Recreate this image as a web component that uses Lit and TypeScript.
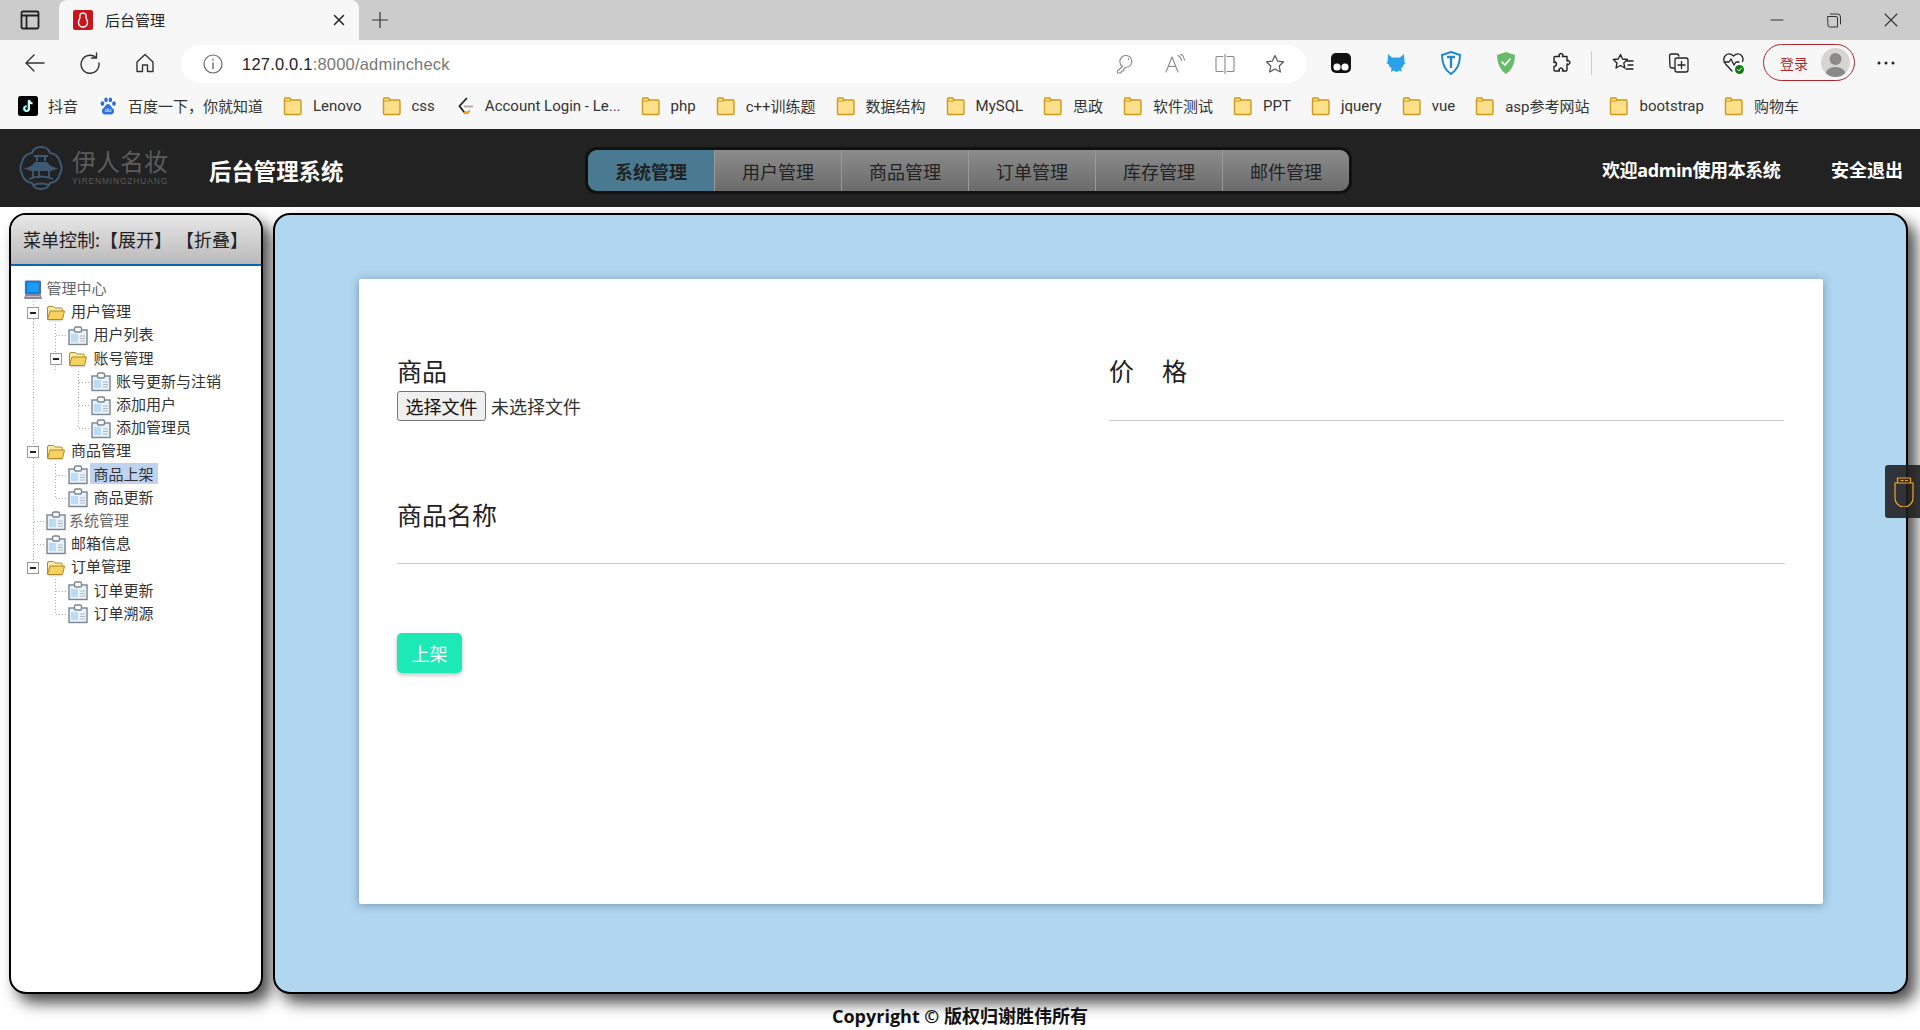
import { LitElement, css, html, svg } from 'lit';
import { customElement } from 'lit/decorators.js';

const folder = html`<svg class="bm-ico" viewBox="0 0 20 20"><path d="M1.5 5V3.2q0-1.2 1.2-1.2h4l1.6 2h8.500q1.200 0 1.200 1.200v12q0 1.300-1.300 1.300H2.800q-1.300 0-1.300-1.300z" fill="#ffe08a" stroke="#c99a1c" stroke-width="1.4"/><path d="M1.500 5h5.500l1.300-1" fill="none" stroke="#c99a1c" stroke-width="1.2"/></svg>`;

const tiktok = html`<svg class="bm-ico" viewBox="0 0 20 20"><rect width="20" height="20" rx="2.5" fill="#000"/><path d="M11 4v8.600a2.400 2.400 0 1 1-2.400-2.400M11 4q.4 3 3.600 3.400" fill="none" stroke="#fff" stroke-width="2"/><path d="M10 4.600v8a2.400 2.400 0 1 1-2.400-2.400" fill="none" stroke="#25f4ee" stroke-width=".8"/></svg>`;

const baidu = html`<svg class="bm-ico" viewBox="0 0 20 20"><rect width="20" height="20" fill="#fff"/><g fill="#2f6fde"><ellipse cx="4.400" cy="7.600" rx="1.900" ry="2.400"/><ellipse cx="8" cy="3.900" rx="1.800" ry="2.400"/><ellipse cx="12.400" cy="3.900" rx="1.800" ry="2.400"/><ellipse cx="16" cy="7.600" rx="1.900" ry="2.400"/><path d="M10 8c-2.600 0-3 3-5 4.500C3 14.500 4 18.500 7 18.500h6c3 0 4-4 2-6C13 11 12.600 8 10 8z"/></g><text x="10" y="16.200" text-anchor="middle" font-size="6" font-family="Liberation Sans" fill="#fff">du</text></svg>`;

const leetcode = html`<svg class="bm-ico" viewBox="0 0 20 20"><path d="M12 2 4.500 10l4.500 6q2 2 4.500 0" fill="none" stroke="#222" stroke-width="1.800"/><path d="M9 10.500h9" stroke="#aaa" stroke-width="1.800"/><path d="M9 16q2 2 4.500 0l1.500-1.500" fill="none" stroke="#f5a623" stroke-width="1.800"/></svg>`;

const bookmarks: [unknown, string][] = [
  [tiktok, '抖音'], [baidu, '百度一下\uFF0C你就知道'], [folder, 'Lenovo'], [folder, 'css'],
  [leetcode, 'Account Login - Le...'], [folder, 'php'], [folder, 'c++训练题'], [folder, '数据结构'],
  [folder, 'MySQL'], [folder, '思政'], [folder, '软件测试'], [folder, 'PPT'], [folder, 'jquery'],
  [folder, 'vue'], [folder, 'asp参考网站'], [folder, 'bootstrap'], [folder, '购物车'],
];

const navItems = ['系统管理', '用户管理', '商品管理', '订单管理', '库存管理', '邮件管理'];

type Cell = 'v' | 'b' | 't' | 'c' | 'mv' | 'mc';
type Node = { cells: Cell[]; icon: 'pc' | 'open' | 'leaf'; label: string; muted?: boolean; selected?: boolean; tight?: boolean };

const tree: Node[] = [
  { cells: [], icon: 'pc', label: '管理中心', muted: true, tight: true },
  { cells: ['mv'], icon: 'open', label: '用户管理' },
  { cells: ['v', 't'], icon: 'leaf', label: '用户列表' },
  { cells: ['v', 'mv'], icon: 'open', label: '账号管理' },
  { cells: ['v', 'b', 't'], icon: 'leaf', label: '账号更新与注销' },
  { cells: ['v', 'b', 't'], icon: 'leaf', label: '添加用户' },
  { cells: ['v', 'b', 'c'], icon: 'leaf', label: '添加管理员' },
  { cells: ['mv'], icon: 'open', label: '商品管理' },
  { cells: ['v', 't'], icon: 'leaf', label: '商品上架', selected: true },
  { cells: ['v', 'c'], icon: 'leaf', label: '商品更新' },
  { cells: ['t'], icon: 'leaf', label: '系统管理', muted: true, tight: true },
  { cells: ['t'], icon: 'leaf', label: '邮箱信息' },
  { cells: ['mc'], icon: 'open', label: '订单管理' },
  { cells: ['b', 't'], icon: 'leaf', label: '订单更新' },
  { cells: ['b', 'c'], icon: 'leaf', label: '订单溯源' },
];

const treeIcons = {
  pc: html`<svg class="ti" viewBox="0 0 20 20"><rect x="2.500" y="1" width="15" height="13" rx="1" fill="#0a84e8" stroke="#667" stroke-width="1.200"/><rect x="4.500" y="3" width="11" height="9" fill="#1e9bf5"/><path d="M1 19l1.500-5h15l1.500 5z" fill="#889"/><path d="M3 16.500h14" stroke="#ccd" stroke-width=".8"/></svg>`,
  open: html`<svg class="ti" viewBox="0 0 20 20"><path d="M1.500 16V5q0-1.500 1.500-1.500h4.500L9 5h6q1.500 0 1.500 1.500V8" fill="#fbeaa8" stroke="#a98a2c"/><path d="M1.500 16.500 4 8h14.500l-2 8.500z" fill="#f7d25e" stroke="#a98a2c"/><path d="M2.500 17.800h14" stroke="#ccc" stroke-width="1"/></svg>`,
  leaf: html`<svg class="ti" viewBox="0 0 20 20"><rect x="1" y="4" width="18" height="14.500" fill="#e8f2fb" stroke="#7b8490" stroke-width="1.400"/><rect x="6.500" y="1" width="7" height="5" rx="1.500" fill="#fff" stroke="#7b8490" stroke-width="1.400"/><rect x="3" y="8" width="7" height="8" fill="#bcdcf6"/><path d="M12 10h5M12 12.500h5M12 15h5" stroke="#b3b8be"/></svg>`,
};

const line = (d: string, w = 1.3, c = '#333') =>
  svg`<path d=${d} fill="none" stroke=${c} stroke-width=${w} stroke-linecap="round" stroke-linejoin="round"/>`;

@customElement('app-root')
export class AppRoot extends LitElement {
  static styles = css`
    :host { display: block; width: 1920px; height: 1030px; overflow: hidden; background: #fff;
      font-family: "Noto Sans CJK SC", sans-serif; color: #222; }
    svg { display: block; flex: none; }

    .tabs { height: 40px; background: #ccc; display: flex; align-items: stretch; padding-left: 20px; }
    .tab-side { width: 39px; display: flex; align-items: center; }
    .tab { width: 300px; box-sizing: border-box; background: #f7f7f7; border-radius: 8px 8px 0 0;
      display: flex; align-items: center; padding: 0 14px; font-size: 15px; }
    .tab-title { margin: 0 0 2px 12px; flex: 1; }
    .new-tab { margin-left: 13px; display: flex; align-items: center; }
    .win { margin-left: auto; display: flex; align-items: center; padding-right: 1px; }
    .win div { width: 57px; display: flex; justify-content: center; }

    .toolbar { height: 45px; background: #f7f7f7; display: flex; align-items: center; padding-left: 7px; }
    .tb { width: 55px; height: 38px; display: flex; align-items: center; justify-content: center; flex: none; }
    .tb.gap { margin-left: 7px; }
    .tb.wide { width: 56px; }
    .address { width: 1125px; height: 38px; margin-left: 9px; margin-top: 3px; box-sizing: border-box; background: #fff; border-radius: 19px;
      display: flex; align-items: center; padding-left: 22px; }
    .url { margin: 1px 0 0 19px; font: 16.5px "Liberation Sans", sans-serif; letter-spacing: 0.2px; color: #777; flex: 1; }
    .url b { font-weight: 400; color: #222; }
    .addr-ico { width: 50px; display: flex; justify-content: center; }
    .addr-end { width: 6px; }
    .sep { width: 1px; height: 24px; background: #ccc; margin: 0 3px; flex: none; }
    .login { width: 92px; height: 37px; box-sizing: border-box; margin: 0 3px 0 2px; border: 1.5px solid #a8282c; border-radius: 19px; display: flex;
      align-items: center; justify-content: space-between; padding: 0 4px 0 16px; font-size: 14px; color: #a8282c; flex: none; }
    .avatar { width: 29px; height: 29px; border-radius: 50%; background: #d6d5d2; overflow: hidden; }

    .bookmarks { height: 44px; box-sizing: border-box; padding: 0 0 3px 18px; background: #f7f7f7; display: flex; align-items: center; gap: 20px;
      font-size: 15px; font-family: Roboto, "Noto Sans CJK SC", sans-serif; color: #333; white-space: nowrap; }
    .bm { display: flex; align-items: center; gap: 10px; }
    .bm-ico { width: 20px; height: 20px; }

    .header { height: 78px; background: #222; display: flex; align-items: center; color: #fff; }
    .logo { width: 190px; display: flex; align-items: center; padding-left: 19px; box-sizing: border-box; gap: 9px; flex: none; }
    .logo-text { color: #5c5c5c; display: flex; flex-direction: column; }
    .logo-cn { font-size: 24px; line-height: 30px; margin-top: -4px; }
    .logo-en { font: 8.5px/11px "Liberation Sans", sans-serif; letter-spacing: 0.8px; white-space: nowrap; }
    .title { font-size: 22.4px; font-weight: 700; margin: 4px 0 0 19px; width: 376px; flex: none; }
    .nav { display: flex; width: 767px; height: 47px; box-sizing: border-box; border: 3px solid #111; border-radius: 12px; overflow: hidden; margin-top: 5px; flex: none; }
    .nav-item { flex: 1; display: flex; align-items: center; justify-content: center; font-size: 18px; color: #222;
      background: linear-gradient(#8c8c8c, #6b6b6b); border-left: 1px solid #9a9a9a; }
    .nav-item.active { background: #4a7a92; font-weight: 700; border-left: 0; }
    .welcome { margin: 1px 0 0 250px; width: 229px; font-size: 18px; font-weight: 700; flex: none; font-family: "Open Sans", "Noto Sans CJK SC", sans-serif; letter-spacing: -0.4px; white-space: nowrap; }
    .logout { font-size: 18px; font-weight: 700; margin-top: 1px; }

    .body { display: flex; gap: 10px; padding: 6px 12px 0 9px; height: 787px; box-sizing: border-box; }
    .panel { border: 2px solid #000; box-shadow: 8px 9px 15px rgba(0, 0, 0, 0.7); height: 781px; box-sizing: border-box; }
    .side { width: 254px; border-radius: 17px; overflow: hidden; background: #fff; flex: none; }
    .side-head { height: 51px; box-sizing: border-box; padding: 0 0 1px 12px; background: linear-gradient(#e8e8e8, #b9b9b9); border-bottom: 2px solid #0a64b4; display: flex; align-items: center;
      font-size: 18px; white-space: nowrap; color: #222; }
    .tree { padding: 12px 0 0 11px; font-size: 15px; color: #333; }
    .row { display: flex; align-items: center; height: 23.2px; }
    .row.muted { color: #666; }
    .cell { width: 22.5px; height: 100%; flex: none; display: flex; align-items: center; justify-content: center; background-repeat: no-repeat; }
    .v, .mv { background-image: repeating-linear-gradient(#aaa 0 1px, transparent 1px 3px); background-size: 1px 100%; background-position: center; }
    .t, .c { background-image: repeating-linear-gradient(#aaa 0 1px, transparent 1px 3px), repeating-linear-gradient(90deg, #aaa 0 1px, transparent 1px 3px); }
    .t { background-size: 1px 100%, 11px 1px; background-position: center, right center; }
    .c { background-size: 1px 50%, 11px 1px; background-position: center top, right center; }
    .mc { background-image: repeating-linear-gradient(#aaa 0 1px, transparent 1px 3px); background-size: 1px 50%; background-position: center top; }
    .box { width: 12px; height: 12px; box-sizing: border-box; background: #fff; border: 1.5px solid #999; display: flex; align-items: center; justify-content: center; }
    .box i { width: 6px; height: 1.5px; background: #222; display: block; }
    .ti { width: 20px; height: 20px; }
    .icon-cell { width: 22.5px; display: flex; justify-content: center; flex: none; }
    .label { margin: 0 1px 4px 4px; }
    .label.tight { margin-left: 2px; }
    .label.selected { background: #bfd2ee; height: 21px; line-height: 21px; padding: 0 4px; margin-left: 0; }

    .main { flex: 1; border-radius: 17px; background: #b0d6f0; padding: 64px 83px 0 84px; }
    .card { background: #fff; height: 625px; box-sizing: border-box; border-radius: 2px; padding: 74px 38px 0;
      box-shadow: 0 1px 10px rgba(40, 70, 100, 0.45); display: flex; flex-direction: column; }
    .fields { display: grid; grid-template-columns: 712px 675px; }
    .field-label { font-size: 25px; line-height: 34px; color: #222; }
    .file { display: flex; align-items: center; font-size: 18px; margin-top: 4px; color: #333; }
    .file-btn { height: 30px; width: 89px; box-sizing: border-box; background: #efefef; border: 1px solid #767676; border-radius: 3px; font: inherit; color: #111; padding: 0; margin-right: 5px; line-height: 26px; }
    .rule { height: 1px; background: #ccc; margin-top: 33px; }
    .name { margin-top: 76px; }
    .name .rule { margin-top: 32px; }
    .submit { margin-top: 69px; width: 65px; height: 40px; background: #1de9b6; border: 0; border-radius: 5px; color: #fff; font: 18px "Noto Sans CJK SC", sans-serif; box-shadow: 0 2px 4px rgba(0, 0, 0, 0.25); padding: 0; }

    .foot { text-align: center; font-family: "Open Sans", "Noto Sans CJK SC", sans-serif; font-size: 18px; font-weight: 700; line-height: 26px; margin-top: 9px; color: #111; }
    .tool-tab { position: absolute; right: 0; top: 465px; width: 35px; height: 53px; background: rgba(30, 30, 30, 0.88); border-radius: 3px 0 0 3px; display: flex; align-items: center; padding-left: 9px; box-sizing: border-box; }
  `;

  private renderCell(c: Cell) {
    if (c === 'mv' || c === 'mc') return html`<div class="cell ${c}"><div class="box"><i></i></div></div>`;
    return html`<div class="cell ${c}"></div>`;
  }

  private renderTree() {
    return tree.map(n => html`
      <div class="row ${n.muted ? 'muted' : ''}">
        ${n.cells.map(c => this.renderCell(c))}
        <div class="icon-cell">${treeIcons[n.icon]}</div>
        <span class="label ${n.selected ? 'selected' : ''} ${n.tight ? 'tight' : ''}">${n.label}</span>
      </div>`);
  }

  private renderChrome() {
    return html`
      <div class="tabs">
        <div class="tab-side"><svg width="20" height="20" viewBox="0 0 20 20">${line('M3 1.500h14q1.500 0 1.500 1.500v14q0 1.500-1.500 1.500H3q-1.500 0-1.500-1.500V3q0-1.500 1.500-1.500zM6.500 5.500V18.500M1.500 5.500h17', 1.8, '#222')}</svg></div>
        <div class="tab">
          <svg width="20" height="20" viewBox="0 0 20 20"><rect width="20" height="20" rx="2" fill="#c4161c"/><path d="M10 3c-2.500 0-3.500 2-3 4 .3 1-1.500 3-1.500 5.500C5.500 15 7.500 17 10 17s4.500-2 4.500-4.500C14.500 10 12.700 8 13 7c.5-2-.5-4-3-4z" fill="none" stroke="#fff" stroke-width="1.400"/></svg>
          <span class="tab-title">后台管理</span>
          <svg width="12" height="12" viewBox="0 0 12 12">${line('M1.500 1.500l9 9M10.500 1.500l-9 9', 1.5, '#222')}</svg>
        </div>
        <div class="new-tab"><svg width="16" height="16" viewBox="0 0 16 16">${line('M8 0v16M0 8h16', 1.2)}</svg></div>
        <div class="win">
          <div><svg width="14" height="14" viewBox="0 0 14 14">${line('M1 7h12', 1)}</svg></div>
          <div><svg width="16" height="16" viewBox="0 0 16 16">${line('M2 4.500h8q1.500 0 1.500 1.500v9H3.500Q2 15 2 13.500zM4.500 2h7q3 0 3 3v7', 1)}</svg></div>
          <div><svg width="14" height="14" viewBox="0 0 14 14">${line('M1 1l12 12M13 1L1 13', 1.1)}</svg></div>
        </div>
      </div>
      <div class="toolbar">
        <div class="tb"><svg width="22" height="20" viewBox="0 0 22 20">${line('M20 10H2M10 2l-8 8 8 8', 1.4)}</svg></div>
        <div class="tb"><svg width="22" height="22" viewBox="0 0 22 22">${line('M17 5.500A9 9 0 1 0 20 11M17.500 1v5h-5', 1.4)}</svg></div>
        <div class="tb"><svg width="20" height="20" viewBox="0 0 20 20">${line('M2 9l8-7.500L18 9v9.500h-5.500V12h-5v6.500H2z', 1.4)}</svg></div>
        <div class="address">
          <svg width="20" height="20" viewBox="0 0 20 20"><circle cx="10" cy="10" r="9" fill="none" stroke="#666" stroke-width="1.200"/>${line('M10 9v5.500M10 5.500v.5', 1.4, '#666')}</svg>
          <span class="url"><b>127.0.0.1</b>:8000/admincheck</span>
          <div class="addr-ico"><svg width="18" height="20" viewBox="0 0 18 20">${line('M6.500 12.500 1.500 17v2H5l.5-2h2l.5-2.500 1.500-1a6 6 0 1 0-3-1zM12.500 4.500v1', 1.1, '#888')}</svg></div>
          <div class="addr-ico"><svg width="20" height="20" viewBox="0 0 20 20">${line('M1 18 7 3l6 15M3.500 12.500h7M13 1.500q3 1.500 3.500 5M15.500 0q3.500 2 4 6', 1.1, '#888')}</svg></div>
          <div class="addr-ico"><svg width="20" height="20" viewBox="0 0 20 20">${line('M10 0v20M8 2.500H2q-1 0-1 1v13q0 1 1 1h6M12 2.500h6q1 0 1 1v13q0 1-1 1h-6', 1.1, '#888')}</svg></div>
          <div class="addr-ico"><svg width="20" height="20" viewBox="0 0 20 20">${line('M10 1.500l2.600 5.600 6 .7-4.400 4.200 1.200 6L10 15l-5.400 3 1.200-6-4.400-4.200 6-.7z', 1.2, '#555')}</svg></div>
          <div class="addr-end"></div>
        </div>
        <div class="tb gap"><svg width="20" height="22" viewBox="0 0 20 22"><rect y="1" width="20" height="20" rx="5" fill="#111"/><circle cx="6" cy="15" r="3.600" fill="#fff"/><circle cx="14" cy="15" r="3.600" fill="#fff"/></svg></div>
        <div class="tb"><svg width="20" height="22" viewBox="0 0 20 22"><path d="M2 2l4 3.500h8L18 2l.5 8 1.500 1-2 1q-.5 3-3 4l.5 4-2-1.500-3 1.500-3-1.500L5 20l.5-4q-2.500-1-3-4L0 11l1.500-1z" fill="#2aa1e8"/></svg></div>
        <div class="tb"><svg width="20" height="24" viewBox="0 0 20 24"><path d="M10 1l9 3q0 13-9 19Q1 17 1 4z" fill="#fff" stroke="#1e88d2" stroke-width="2"/><path d="M6 6h8M10 6v11" stroke="#1e88d2" stroke-width="2.400"/></svg></div>
        <div class="tb"><svg width="20" height="24" viewBox="0 0 20 24"><path d="M10 1l9 3q0 13-9 19Q1 17 1 4z" fill="#68bb6c"/>${line('M6 11l3 3 5-6', 1.6, '#fff')}</svg></div>
        <div class="tb"><svg width="20" height="22" viewBox="0 0 20 22">${line('M8 3q2-3 4 0l-.5 1.500H16V9l1.500-.5q3 2 0 4L16 12v6q0 1-1 1h-3.500l.5-1.500q-2-3-4 0l.5 1.500H4q-1 0-1-1v-3.500L4.500 14q2-2 0-4L3 10.500V5.500q0-1 1-1h4.500z', 1.4, '#222')}</svg></div>
        <div class="sep"></div>
        <div class="tb wide"><svg width="22" height="20" viewBox="0 0 22 20">${line('M8.500 1.500l2 4.500 5 .5-3.700 3.500 1 5L8.500 12.500 4 15l1-5L1.300 6.500l5-.5zM15 8h6M16 12h5M14 16h7', 1.3, '#222')}</svg></div>
        <div class="tb"><svg width="22" height="22" viewBox="0 0 22 22">${line('M6 16H4q-2 0-2-2L1.500 4q0-2 2-2h5q2 0 2.500 2M7 8q0-2 2-2h9q2 0 2 2v10q0 2-2 2H9q-2 0-2-2zM13.500 9.500v7M10 13h7', 1.3, '#222')}</svg></div>
        <div class="tb"><svg width="24" height="24" viewBox="0 0 24 24">${line('M10 20 3.500 13Q0 8 3.500 4.500t8 .5q4.500-4 8-.5 2.500 3 1 6M2 11h5l2-3 3 6 2-3h3', 1.3, '#222')}<circle cx="17.500" cy="18.500" r="4.500" fill="#107c10"/>${line('M15.500 18.500l1.500 1.500 2.500-3', 1, '#fff')}</svg></div>
        <div class="login">
          <span>登录</span>
          <div class="avatar"><svg width="29" height="29" viewBox="0 0 29 29"><circle cx="14.500" cy="11" r="6" fill="#8a8a8a"/><ellipse cx="14.500" cy="26" rx="10" ry="7" fill="#8a8a8a"/></svg></div>
        </div>
        <div class="tb"><svg width="18" height="4" viewBox="0 0 18 4"><circle cx="2" cy="2" r="1.500" fill="#222"/><circle cx="9" cy="2" r="1.500" fill="#222"/><circle cx="16" cy="2" r="1.500" fill="#222"/></svg></div>
      </div>
      <div class="bookmarks">
        ${bookmarks.map(([icon, text]) => html`<div class="bm">${icon}<span>${text}</span></div>`)}
      </div>`;
  }

  render() {
    return html`
      ${this.renderChrome()}
      <div class="header">
        <div class="logo">
          <svg width="44" height="44" viewBox="0 0 44 44" fill="none" stroke="#3d5a75"><path d="M22 1q7 0 9 6 8 1 10 9 3 6 0 12-2 8-10 9-2 6-9 6t-9-6q-8-1-10-9-3-6 0-12 2-8 10-9 2-6 9-6z" stroke-width="2"/><path d="M15 10h14M18 10v5M26 10v5" stroke-width="2"/><path d="M4 22q8 0 12-6h12q4 6 12 6l-8 3H12z" fill="#3d5a75" stroke="none"/><path d="M14 25v7M30 25v7M20 25v7M10 33q12-5 24 0" stroke-width="1.800"/><path d="M14 39q8-3 16 0" stroke-width="2"/></svg>
          <div class="logo-text"><span class="logo-cn">伊人名妆</span><span class="logo-en">YIRENMINGZHUANG</span></div>
        </div>
        <div class="title">后台管理系统</div>
        <div class="nav">
          ${navItems.map((n, i) => html`<div class="nav-item ${i === 0 ? 'active' : ''}">${n}</div>`)}
        </div>
        <div class="welcome">欢迎admin使用本系统</div>
        <div class="logout">安全退出</div>
      </div>
      <div class="body">
        <div class="panel side">
          <div class="side-head">菜单控制:【展开】 【折叠】</div>
          <div class="tree">${this.renderTree()}</div>
        </div>
        <div class="panel main">
          <div class="card">
            <div class="fields">
              <div>
                <div class="field-label">商品</div>
                <div class="file"><button class="file-btn">选择文件</button><span>未选择文件</span></div>
              </div>
              <div>
                <div class="field-label">价&nbsp;&nbsp;&nbsp;&nbsp;&nbsp;格</div>
                <div class="rule"></div>
              </div>
            </div>
            <div class="name">
              <div class="field-label">商品名称</div>
              <div class="rule"></div>
            </div>
            <button class="submit">上架</button>
          </div>
        </div>
      </div>
      <div class="foot">Copyright © 版权归谢胜伟所有</div>
      <div class="tool-tab"><svg width="20" height="30" viewBox="0 0 20 30" fill="none" stroke="#f5a623" stroke-width="1.200"><path d="M3.500 1h13v5h-13zM1 6h18v15a9 9 0 0 1-18 0zM6.500 3.500h3M11 3.500h3"/></svg></div>
    `;
  }
}
